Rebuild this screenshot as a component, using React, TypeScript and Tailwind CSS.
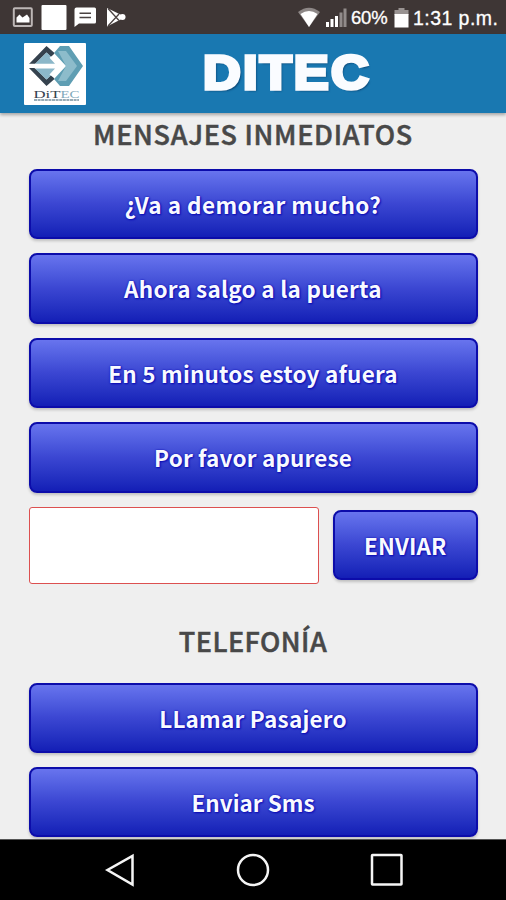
import React from "react";

const textGlow = "[text-shadow:0_0_2px_#0b0bb4,1px_1px_2px_#0b0bb4]";

function ActionButton({ label, size, width = "w-full" }: { label: string; size: string; width?: string }) {
  return (
    <button
      className={`flex h-[70.4px] shrink-0 items-center justify-center rounded-[8px] border-2 border-[#0c0caa] bg-linear-to-b from-[#6874ee] via-[#3b46d2] to-[#141eb6] shadow-[0_2px_3px_rgba(0,0,0,0.2)] ${width}`}
    >
      <span className={`whitespace-nowrap font-['Noto_Sans_CJK_JP',sans-serif] text-[22.5px] leading-none font-bold text-[#f8faff] ${textGlow} ${size}`}>
        {label}
      </span>
    </button>
  );
}

function StatusBar() {
  return (
    <div className="flex h-[34px] shrink-0 items-center justify-between bg-[#3e3635]">
      <svg width="130" height="34" viewBox="0 0 130 34">
        <rect x="13.8" y="8.3" width="18" height="17.6" rx="1" fill="none" stroke="#bdb7b6" strokeWidth="2" />
        <path d="M16.5 22.5v-5l3-3 3 3 4.5-3 2.5 3.5v4.500z" fill="#fff" />
        <rect x="41.500" y="5" width="25" height="25" rx="1" fill="#fff" />
        <path d="M76.500 7.500h18q1.500 0 1.500 1.500v13q0 1.500-1.500 1.500H79L74.500 27V9.500q0-2 2-2z" fill="#fff" />
        <path d="M79.500 13.200h11.500M79.500 17.500h11.500" stroke="#4a4241" strokeWidth="1.500" />
        <path d="M107 8v18.500l18.500-9.500z" fill="#fff" />
        <path d="M108 8.500l11 12M108 26l11-12" stroke="#4a4241" strokeWidth="1.300" />
        <circle cx="122.500" cy="17" r="3" fill="#fff" />
      </svg>
      <div className="flex h-[34px] w-[211px] items-center font-['Liberation_Sans',sans-serif] text-white">
        <svg className="shrink-0" width="56" height="34" viewBox="0 0 56 34">
          <path d="M3 12Q14 3.500 25 12L14 27z" fill="#8d8786" />
          <path d="M5.500 14Q14 8 22.500 14L14 27z" fill="#fff" />
          <path d="M31 22h3v5h-3zM35.500 19h3v8h-3zM40 16h3v11h-3z" fill="#fff" />
          <path d="M44.500 12.500h3V27h-3zM48.500 8.500h3V27h-3z" fill="#918b8a" />
        </svg>
        <span className="w-[42px] pt-[3px] text-[18.500px] leading-none tracking-[-0.2px] whitespace-nowrap [-webkit-text-stroke:0.300px_#fff]">60%</span>
        <svg className="shrink-0" width="20" height="34" viewBox="0 0 20 34">
          <path d="M5.500 8h6v2h4v5h-14v-5h4z" fill="#999392" />
          <rect x="1.500" y="14" width="14" height="13.500" fill="#fff" />
        </svg>
        <span className="pt-[3px] text-[19.500px] leading-none tracking-[0.450px] whitespace-nowrap [-webkit-text-stroke:0.300px_#fff]">1:31 p.m.</span>
      </div>
    </div>
  );
}

function Logo() {
  return (
    <svg className="ml-[24px] shrink-0" width="62" height="62" viewBox="0 0 62 62">
      <rect width="62" height="62" rx="1" fill="#fff" />
      <path d="M5 21L22.500 3 30.500 10l-3 4.500-5-5L11 21zM5 25l17.500 18 8-7-3-4.500-5 5L11 25z" fill="#35424e" />
      <path d="M11.500 20.500L22.500 9.500l10 9 2 4.500-2 4.500-10 9L11.500 26z" fill="#8bb7c9" />
      <path d="M30 10l6-7h9l14 20-14 20h-9l-6-7 12-13z" fill="#5f9eb3" />
      <path d="M34 8h8l11 15-11 15h-8l8-15z" fill="#8dbccb" />
      <path d="M5 20.800h26l-5.500-6 4-3L41.500 23 29.500 34.500l-4-3 5.500-6H11z" fill="#fff" />
      <text x="9.500" y="54.500" textLength="27" lengthAdjust="spacingAndGlyphs" fontFamily="Liberation Serif, serif" fontSize="11" fill="#35424e">DiT</text>
      <text x="36.500" y="54.500" textLength="19" lengthAdjust="spacingAndGlyphs" fontFamily="Liberation Serif, serif" fontSize="10.500" fill="#7fa9ba">EC</text>
      <path d="M10 57h45" stroke="#75909f" strokeWidth="1.500" strokeDasharray="3 .6" />
    </svg>
  );
}

const headingClass =
  "text-center font-['Noto_Sans_CJK_JP',sans-serif] font-medium leading-none whitespace-nowrap text-[#484848] [-webkit-text-stroke:0.500px_#484848]";

export default function App() {
  return (
    <div className="flex h-[900px] w-[506px] flex-col overflow-hidden bg-[#efefef]">
      <StatusBar />
      <header className="z-10 flex h-[79px] shrink-0 items-center bg-[#1978b1] shadow-[0_2px_3px_rgba(0,0,0,0.3)]">
        <Logo />
        <h1 className="ml-[117px] origin-left scale-x-[1.09] pb-[2px] font-['Liberation_Sans',sans-serif] text-[48px] leading-none font-bold tracking-[2px] text-[#fafcff] [-webkit-text-stroke:3.500px_#fafcff] [text-shadow:2px_2px_2px_#073e6c]">
          DITEC
        </h1>
      </header>
      <main className="flex h-[726px] shrink-0 flex-col overflow-hidden px-[28.5px]">
        <h2 className={`${headingClass} h-[56px] shrink-0 pt-[7px] text-[27px] tracking-[0.700px]`}>MENSAJES INMEDIATOS</h2>
        <div className="flex shrink-0 flex-col gap-[14px]">
          <ActionButton label="¿Va a demorar mucho?" size="tracking-[0.450px]" />
          <ActionButton label="Ahora salgo a la puerta" size="tracking-[0.250px]" />
          <ActionButton label="En 5 minutos estoy afuera" size="tracking-[0.200px]" />
          <ActionButton label="Por favor apurese" size="tracking-[0.150px]" />
        </div>
        <div className="mt-[14px] flex h-[77px] shrink-0 items-center gap-[14px]">
          <input aria-label="Mensaje" className="h-[77px] w-[290px] shrink-0 rounded-[3px] border-[1.500px] border-[#dc5050] bg-white outline-none" />
          <ActionButton label="ENVIAR" size="tracking-[0.100px]" width="w-[145.5px]" />
        </div>
        <h2 className={`${headingClass} h-[99px] shrink-0 pt-[43px] text-[27px] tracking-[0.450px]`}>TELEFONÍA</h2>
        <div className="flex shrink-0 flex-col gap-[14px]">
          <ActionButton label="LLamar Pasajero" size="tracking-[0.200px]" />
          <ActionButton label="Enviar Sms" size="tracking-[0px]" />
        </div>
      </main>
      <nav className="h-[61px] shrink-0 border-t border-[#555] bg-black">
        <svg width="506" height="60" viewBox="0 840 506 60" fill="none" stroke="#f5f5f5" strokeWidth="2.500">
          <path d="M132.500 856v28.500L107.500 870z" />
          <circle cx="253" cy="870" r="15" />
          <rect x="372" y="855" width="29.500" height="29.500" rx="0.500" />
        </svg>
      </nav>
    </div>
  );
}
